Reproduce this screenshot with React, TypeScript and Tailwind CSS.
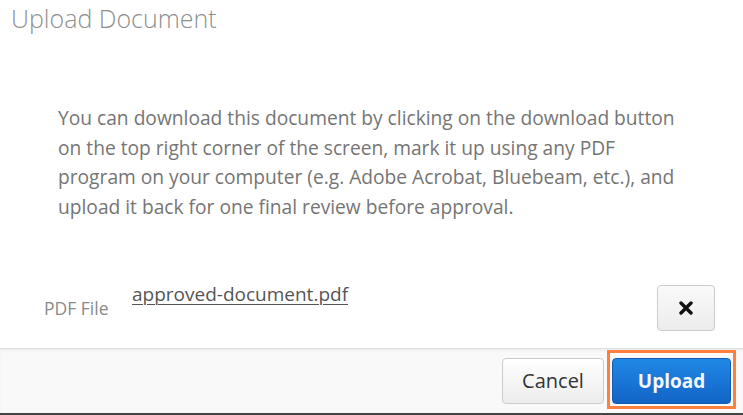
import React from 'react';

const font = { fontFamily: '"Open Sans", "Liberation Sans", sans-serif' };

const App: React.FC = () => {
  return (
    <div className="w-[743px] h-[415px] bg-white flex flex-col overflow-hidden" style={font}>
      <header className="h-[40px] px-[11px] pt-[2px]">
        <h2 className="text-[25px] font-light text-[#8f8f8f] leading-[32px]">Upload Document</h2>
      </header>

      <div className="flex-1 flex flex-col">
        <p className="pl-[58px] pr-[60px] pt-[63px] text-[19.2px] leading-[29.6px] text-[#757575]">
          You can download this document by clicking on the download button on the top right corner of the screen, mark it up using any PDF program on your computer (e.g. Adobe Acrobat, Bluebeam, etc.), and upload it back for one final review before approval.
        </p>

        <div className="flex items-start pl-[44px] pr-[28px] pt-[64px]">
          <span className="text-[17.5px] text-[#8a8a8a] mt-[10px] w-[88px]">PDF File</span>
          <a className="text-[19px] text-[#555] underline underline-offset-[3px] decoration-[1px] leading-[26px] mt-[-4px]" href="#">
            approved-document.pdf
          </a>
          <button className="ml-auto w-[58px] h-[46px] rounded-[4px] border border-[#ccc] bg-gradient-to-b from-[#fafafa] to-[#ececec] flex items-center justify-center">
            <svg width="14" height="14" viewBox="0 0 14 14">
              <path d="M2 2 L12 12 M12 2 L2 12" stroke="#111" strokeWidth="3.4" strokeLinecap="round" />
            </svg>
          </button>
        </div>
      </div>

      <footer className="h-[65px] border-t border-[#dcdcdc] bg-[#f9f9f9] flex items-start justify-end gap-[3px] pt-[9px] pr-[7px] shadow-[inset_0_2px_3px_rgba(0,0,0,0.04)]">
        <button className="w-[102px] h-[46px] rounded-[4px] border border-[#ccc] bg-gradient-to-b from-[#ffffff] to-[#ececec] text-[20px] text-[#333]">
          Cancel
        </button>
        <div className="mt-[-8px] pt-[5px] pb-[2px] px-[2px] border-[3px] border-[#ff7f3f]">
          <button className="w-[119px] h-[46px] rounded-[4px] border border-[#1559b3] bg-gradient-to-b from-[#2188e6] to-[#1264c6] text-[19px] font-bold text-[#f4f8ff]">
            Upload
          </button>
        </div>
      </footer>
      <div className="h-[2px] bg-[#444]" />
    </div>
  );
};

export default App;
